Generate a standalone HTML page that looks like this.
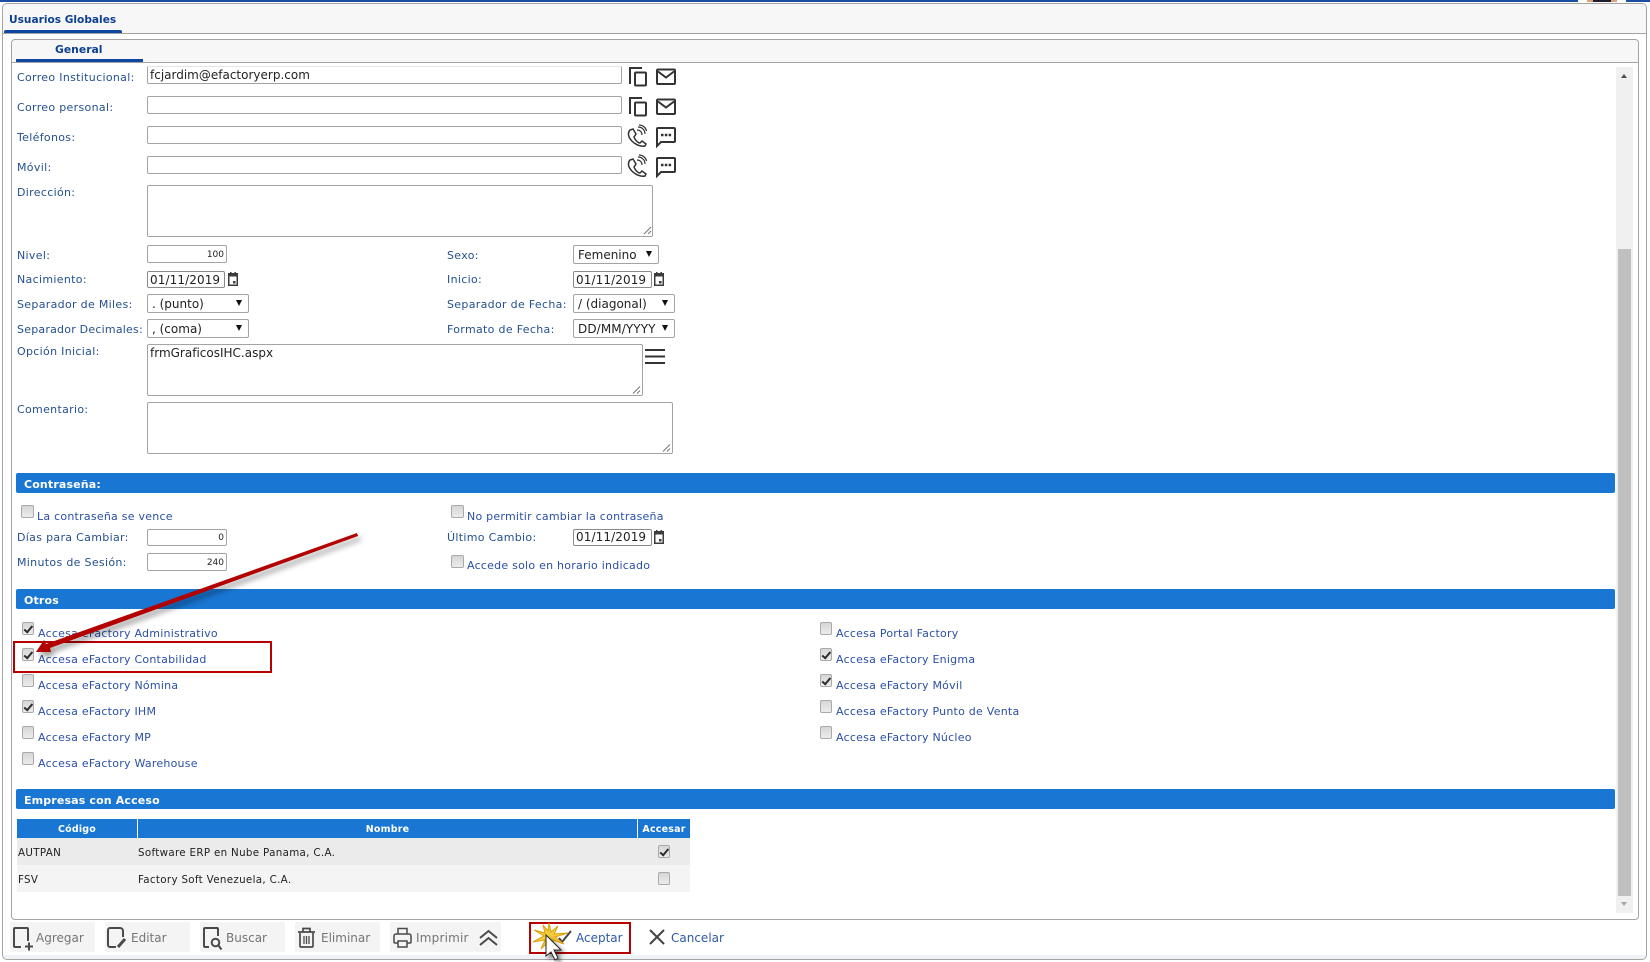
<!DOCTYPE html>
<html lang="es">
<head>
<meta charset="utf-8">
<title>Usuarios Globales</title>
<style>
html,body{margin:0;padding:0;background:#fff}
body{position:relative;width:1650px;height:962px;overflow:hidden;font-family:"DejaVu Sans",Verdana,sans-serif;font-size:11px;color:#24508f}
.a,.t,.i,.s,.v,.n,.cb,svg.ic{position:absolute}
.t{white-space:nowrap;line-height:14px;height:14px}
.l{color:#24508f;font-size:11px;letter-spacing:.32px;margin-top:1px}
.c{color:#2a4fa5;font-size:11px;letter-spacing:.24px;margin-top:1px}
.i,.s{box-sizing:border-box;border:1px solid #a3a3a3;border-radius:2px;background:#fff}
.v{color:#222;font-size:12px;line-height:16px;white-space:nowrap}
.n{color:#222;font-size:9px;line-height:14px;text-align:right;white-space:nowrap}
.s:after{content:"";position:absolute;right:6px;top:5px;border-left:3.5px solid transparent;border-right:3.5px solid transparent;border-top:6px solid #111}
.bar{position:absolute;left:16px;width:1599px;height:20px;background:#1976d2;border-radius:2px;color:#fff;font-weight:bold;font-size:11px;letter-spacing:.15px;line-height:23px;text-indent:8px}
.cb{box-sizing:border-box;width:12.500px;height:12.500px;border:1px solid #aaa;border-radius:2px;background:linear-gradient(#d6d6d6,#ececec)}
.cb.k:after{content:"";position:absolute;left:3.5px;top:0.5px;width:3px;height:6.5px;border:solid #2c2c2c;border-width:0 2.2px 2.2px 0;transform:rotate(40deg)}
.tb{position:absolute;top:922px;height:30px;width:85px;background:#f4f4f4;border-radius:2px}
.tt{color:#757575;font-size:12px}
.b{color:#2d5aa8;font-size:12px}
.th{color:#fff;font-weight:bold;font-size:9.500px;letter-spacing:.2px;text-align:center}
.td{color:#222;font-size:10.300px;letter-spacing:.32px}
svg.ic{fill:none;stroke:#333;stroke-width:2;overflow:visible}
</style>
</head>
<body>
<!-- top line -->
<div class="a" style="left:0;top:0;width:1578px;height:1.5px;background:#1a4fa0"></div>
<div class="a" style="left:1626px;top:0;width:24px;height:1.5px;background:#1a4fa0"></div>
<div class="a" style="left:1587px;top:0;width:6px;height:1.5px;background:#d9a37c"></div>
<div class="a" style="left:1593px;top:0;width:18px;height:1.5px;background:#201c30"></div>
<div class="a" style="left:1611px;top:0;width:6px;height:1.5px;background:#d9a37c"></div>

<!-- outer panel -->
<div class="a" style="box-sizing:border-box;left:2px;top:3px;width:1645px;height:957px;border:1px solid #a3a3a3;border-radius:5px;overflow:hidden;background:#fff">
  <div class="a" style="left:0;top:0;width:100%;height:29px;background:#f7f7f7;border-bottom:1px solid #a3a3a3"></div>
  <div class="a" style="left:0;bottom:0;width:100%;height:4px;background:#eef2f6"></div>
</div>
<div class="a" style="left:4px;top:30px;width:118px;height:3px;background:#0d47a1;border-radius:2px 2px 0 0"></div>
<div class="t" style="left:9px;top:13px;font-weight:bold;font-size:10.6px;color:#0d3f91">Usuarios Globales</div>

<!-- inner panel -->
<div class="a" style="box-sizing:border-box;left:11px;top:39px;width:1628px;height:881px;border:1px solid #a3a3a3;border-radius:4px;overflow:hidden;background:#fff">
  <div class="a" style="left:0;top:0;width:100%;height:22px;background:#f7f7f7;border-bottom:1px solid #a3a3a3"></div>
</div>
<div class="a" style="left:16px;top:59px;width:127px;height:3px;background:#0d47a1"></div>
<div class="t" style="left:55px;top:43px;font-weight:bold;font-size:10.8px;color:#0d3f91">General</div>

<!-- scrollbar -->
<div class="a" style="left:1616px;top:67px;width:17px;height:846px;background:#f0f0f0"></div>
<div class="a" style="left:1618px;top:249px;width:13px;height:647px;background:#c0c0c0"></div>
<div class="a" style="left:1621px;top:74px;border-left:3.5px solid transparent;border-right:3.5px solid transparent;border-bottom:4px solid #505050"></div>
<div class="a" style="left:1621px;top:902px;border-left:3.5px solid transparent;border-right:3.5px solid transparent;border-top:4px solid #a3a3a3"></div>

<!-- labels -->
<div class="t l" style="left:17px;top:70px">Correo Institucional:</div>
<div class="t l" style="left:17px;top:100px">Correo personal:</div>
<div class="t l" style="left:17px;top:130px">Teléfonos:</div>
<div class="t l" style="left:17px;top:160px">Móvil:</div>
<div class="t l" style="left:17px;top:185px">Dirección:</div>
<div class="t l" style="left:17px;top:248px">Nivel:</div>
<div class="t l" style="left:17px;top:272px">Nacimiento:</div>
<div class="t l" style="left:17px;top:297px">Separador de Miles:</div>
<div class="t l" style="left:17px;top:322px;letter-spacing:.22px">Separador Decimales:</div>
<div class="t l" style="left:17px;top:344px">Opción Inicial:</div>
<div class="t l" style="left:17px;top:402px">Comentario:</div>
<div class="t l" style="left:447px;top:248px">Sexo:</div>
<div class="t l" style="left:447px;top:272px">Inicio:</div>
<div class="t l" style="left:447px;top:297px">Separador de Fecha:</div>
<div class="t l" style="left:447px;top:322px">Formato de Fecha:</div>

<!-- inputs -->
<div class="i" style="left:147px;top:66px;width:475px;height:18px;border-top-color:#e5e5e5"></div>
<div class="v" style="left:150px;top:67px">fcjardim@efactoryerp.com</div>
<div class="i" style="left:147px;top:96px;width:475px;height:18px"></div>
<div class="i" style="left:147px;top:126px;width:475px;height:18px"></div>
<div class="i" style="left:147px;top:156px;width:475px;height:18px"></div>
<div class="i" style="left:147px;top:185px;width:506px;height:52px"></div>
<div class="i" style="left:147px;top:245px;width:80px;height:18px"></div>
<div class="n" style="left:147px;top:248px;width:77px">100</div>
<div class="s" style="left:573px;top:245px;width:86px;height:19px"></div>
<div class="v" style="left:578px;top:247px">Femenino</div>
<div class="i" style="left:147px;top:271px;width:78px;height:17px;border-color:#8a8a8a"></div>
<div class="v" style="left:150px;top:272px;letter-spacing:.1px">01/11/2019</div>
<div class="i" style="left:573px;top:271px;width:79px;height:17px;border-color:#8a8a8a"></div>
<div class="v" style="left:576px;top:272px;letter-spacing:.1px">01/11/2019</div>
<div class="s" style="left:147px;top:294px;width:102px;height:19px"></div>
<div class="v" style="left:152px;top:296px">. (punto)</div>
<div class="s" style="left:573px;top:294px;width:102px;height:19px"></div>
<div class="v" style="left:578px;top:296px">/ (diagonal)</div>
<div class="s" style="left:147px;top:319px;width:102px;height:19px"></div>
<div class="v" style="left:152px;top:321px">, (coma)</div>
<div class="s" style="left:573px;top:319px;width:102px;height:19px"></div>
<div class="v" style="left:578px;top:321px;width:79px;overflow:hidden;letter-spacing:.1px">DD/MM/YYYY</div>
<div class="i" style="left:147px;top:344px;width:496px;height:52px"></div>
<div class="v" style="left:150px;top:345px">frmGraficosIHC.aspx</div>
<div class="i" style="left:147px;top:402px;width:526px;height:52px"></div>

<!-- textarea grips -->
<svg class="ic" style="left:0;top:0;width:1px;height:1px;stroke:#777;stroke-width:1">
  <path d="M644 234l7-7M648 234l3-3M633 393.500l7-7M637 393.500l3-3M663 451.500l7-7M667 451.500l3-3"/>
</svg>

<!-- row icons -->
<svg class="ic" style="left:0;top:0;width:1px;height:1px">
  <g transform="translate(0,-1)">
    <path d="M642 69H630V85"/><rect x="635" y="73.500" width="11" height="13" rx="1"/>
    <path d="M642 99H630V115"/><rect x="635" y="103.500" width="11" height="13" rx="1"/>
    <rect x="657" y="70.500" width="18" height="14.500" rx="1"/><path d="M658 72.500L666 78.500L674 72.500"/>
    <rect x="657" y="100.500" width="18" height="14.500" rx="1"/><path d="M658 102.500L666 108.500L674 102.500"/>
    <path d="M658 129H674a1 1 0 0 1 1 1V142a1 1 0 0 1 -1 1H661L657 147V130a1 1 0 0 1 1-1Z"/>
    <path d="M661 136h2.500M664.800 136h2.500M668.600 136h2.500" stroke-width="2.500"/>
    <path d="M658 159H674a1 1 0 0 1 1 1V172a1 1 0 0 1 -1 1H661L657 177V160a1 1 0 0 1 1-1Z"/>
    <path d="M661 166h2.500M664.800 166h2.500M668.600 166h2.500" stroke-width="2.500"/>
    <g stroke-width="1.500" transform="translate(-2,0)">
      <path d="M632 131L635 130L638 135L636 138C637 141 640 144 642 144L644 142L648 145L647 147C639 149 626 138 632 131Z"/>
      <path d="M639 131C642 131 644 133 644 136M640 128C644 128 647 131 647 135M641 126C645 126 648 129 648.500 132" stroke-width="1.200"/>
      <path d="M632 161L635 160L638 165L636 168C637 171 640 174 642 174L644 172L648 175L647 177C639 179 626 168 632 161Z"/>
      <path d="M639 161C642 161 644 163 644 166M640 158C644 158 647 161 647 165M641 156C645 156 648 159 648.500 162" stroke-width="1.200"/>
    </g>
  </g>
  <!-- calendars -->
  <g fill="#3c3c3c" stroke="none">
    <path d="M228 273h2v-1h1.500v1h3v-1h1.500v1h2v13h-10zM229.500 276.500v8h7v-8z"/>
    <rect x="233" y="281" width="2.500" height="2.500"/>
    <path d="M654 273h2v-1h1.500v1h3v-1h1.500v1h2v13h-10zM655.500 276.500v8h7v-8z"/>
    <rect x="659" y="281" width="2.500" height="2.500"/>
    <path d="M654 531h2v-1h1.500v1h3v-1h1.500v1h2v13h-10zM655.500 534.500v8h7v-8z"/>
    <rect x="659" y="539" width="2.500" height="2.500"/>
  </g>
  <path d="M645 350H665M645 356.500H665M645 363H665" stroke-width="2"/>
</svg>

<!-- Contraseña -->
<div class="bar" style="top:473px">Contraseña:</div>
<div class="cb" style="left:21px;top:505px"></div>
<div class="t c" style="left:37px;top:509px">La contraseña se vence</div>
<div class="cb" style="left:451px;top:505px"></div>
<div class="t c" style="left:467px;top:509px">No permitir cambiar la contraseña</div>
<div class="t l" style="left:17px;top:530px">Días para Cambiar:</div>
<div class="i" style="left:147px;top:529px;width:80px;height:17px"></div>
<div class="n" style="left:147px;top:531px;width:77px">0</div>
<div class="t l" style="left:447px;top:530px">Último Cambio:</div>
<div class="i" style="left:573px;top:529px;width:79px;height:17px;border-color:#8a8a8a"></div>
<div class="v" style="left:576px;top:529px;letter-spacing:.1px">01/11/2019</div>
<div class="t l" style="left:17px;top:555px">Minutos de Sesión:</div>
<div class="i" style="left:147px;top:553px;width:80px;height:18px"></div>
<div class="n" style="left:147px;top:556px;width:77px">240</div>
<div class="cb" style="left:451px;top:555px"></div>
<div class="t c" style="left:467px;top:558px">Accede solo en horario indicado</div>

<!-- Otros -->
<div class="bar" style="top:589px">Otros</div>
<div class="cb k" style="left:21.500px;top:622px"></div><div class="t c" style="left:38px;top:626px">Accesa eFactory Administrativo</div>
<div class="cb k" style="left:21.500px;top:648px"></div><div class="t c" style="left:38px;top:652px">Accesa eFactory Contabilidad</div>
<div class="cb" style="left:21.500px;top:674px"></div><div class="t c" style="left:38px;top:678px">Accesa eFactory Nómina</div>
<div class="cb k" style="left:21.500px;top:700px"></div><div class="t c" style="left:38px;top:704px">Accesa eFactory IHM</div>
<div class="cb" style="left:21.500px;top:726px"></div><div class="t c" style="left:38px;top:730px">Accesa eFactory MP</div>
<div class="cb" style="left:21.500px;top:752px"></div><div class="t c" style="left:38px;top:756px">Accesa eFactory Warehouse</div>
<div class="cb" style="left:819.500px;top:622px"></div><div class="t c" style="left:836px;top:626px">Accesa Portal Factory</div>
<div class="cb k" style="left:819.500px;top:648px"></div><div class="t c" style="left:836px;top:652px">Accesa eFactory Enigma</div>
<div class="cb k" style="left:819.500px;top:674px"></div><div class="t c" style="left:836px;top:678px">Accesa eFactory Móvil</div>
<div class="cb" style="left:819.500px;top:700px"></div><div class="t c" style="left:836px;top:704px">Accesa eFactory Punto de Venta</div>
<div class="cb" style="left:819.500px;top:726px"></div><div class="t c" style="left:836px;top:730px">Accesa eFactory Núcleo</div>

<!-- Empresas -->
<div class="bar" style="top:789px">Empresas con Acceso</div>
<div class="a" style="left:17px;top:819px;width:673px;height:19px;background:#1976d2"></div>
<div class="a" style="left:137px;top:819px;width:1px;height:19px;background:#fff"></div>
<div class="a" style="left:637px;top:819px;width:1px;height:19px;background:#fff"></div>
<div class="t th" style="left:17px;top:823px;width:120px">Código</div>
<div class="t th" style="left:138px;top:823px;width:499px">Nombre</div>
<div class="t th" style="left:638px;top:823px;width:52px">Accesar</div>
<div class="a" style="left:17px;top:838px;width:673px;height:27px;background:#ebebeb"></div>
<div class="a" style="left:17px;top:865px;width:673px;height:27px;background:#f4f4f4"></div>
<div class="t td" style="left:18px;top:846px">AUTPAN</div>
<div class="t td" style="left:138px;top:846px">Software ERP en Nube Panama, C.A.</div>
<div class="t td" style="left:18px;top:873px">FSV</div>
<div class="t td" style="left:138px;top:873px">Factory Soft Venezuela, C.A.</div>
<div class="cb k" style="left:657.500px;top:845px"></div>
<div class="cb" style="left:657.500px;top:872px"></div>

<!-- toolbar -->
<div class="tb" style="left:10px"></div><div class="t tt" style="left:36px;top:931px">Agregar</div>
<div class="tb" style="left:105px"></div><div class="t tt" style="left:131px;top:931px">Editar</div>
<div class="tb" style="left:200px"></div><div class="t tt" style="left:226px;top:931px">Buscar</div>
<div class="tb" style="left:295px"></div><div class="t tt" style="left:321px;top:931px">Eliminar</div>
<div class="tb" style="left:390px"></div><div class="t tt" style="left:416px;top:931px;letter-spacing:.2px">Imprimir</div>
<div class="tb" style="left:475px;width:26px"></div>
<svg class="ic" style="left:0;top:0;width:1px;height:1px;stroke:#4a4a4a">
  <path d="M21 947H15a1 1 0 0 1-1-1V929a1 1 0 0 1 1-1H27a1 1 0 0 1 1 1V941M25 946.500H33M29 942.500V950.500"/>
  <path d="M116 947H110a2 2 0 0 1-2-2V930a2 2 0 0 1 2-2H120a3 3 0 0 1 3 3V937"/>
  <path d="M125 939L118 947" stroke-width="3"/>
  <path d="M209 947H205a1 1 0 0 1-1-1V929a1 1 0 0 1 1-1H217a1 1 0 0 1 1 1V936"/>
  <circle cx="215.500" cy="942.500" r="3.800"/>
  <path d="M218.500 945.500L221.500 949.500"/>
  <path d="M298 932H315M303 931.500V928.500H310V931.500M300 933V946a1 1 0 0 0 1 1H312a1 1 0 0 0 1-1V933" stroke-width="1.700"/>
  <path d="M304 936V944M306.500 936V944M309 936V944" stroke-width="1.300"/>
  <path d="M398 934V928.500H407V934M398 943H395a1 1 0 0 1-1-1V936a2 2 0 0 1 2-2H409a2 2 0 0 1 2 2V942a1 1 0 0 1-1 1H407M398 941H407V947H398Z" stroke-width="1.500"/>
  <path d="M480 938L488.500 931L497 938M480 945L488.500 938L497 945" stroke-width="2"/>
</svg>

<!-- Aceptar / Cancelar -->
<div class="a" style="box-sizing:border-box;left:529px;top:922px;width:102px;height:32px;border:2px solid #b80000"></div>
<svg class="ic" style="left:0;top:0;width:1px;height:1px;stroke:#444">
  <path d="M559 938L562 942L571 931" stroke-width="2"/>
  <path d="M650 930L664 944M664 930L650 944" stroke-width="2"/>
</svg>
<div class="t b" style="left:576px;top:931px">Aceptar</div>
<div class="t b" style="left:671px;top:931px">Cancelar</div>

<!-- callouts -->
<div class="a" style="box-sizing:border-box;left:13px;top:641px;width:259px;height:32px;border:2px solid #b80000"></div>
<svg class="a" style="left:0;top:0;filter:drop-shadow(3px 4px 3px rgba(0,0,0,.4))" width="1650" height="962">
  <path d="M357 533L358 536L50 648L51 652L36 652L44 640L46 644Z" fill="#b30000"/>
</svg>
<svg class="a" style="left:0;top:0" width="1650" height="962">
  <path d="M549 923L551 932L558 926L554 934L568 933L555 937L564 944L553 940L553 948L549 941L541 949L545 940L533 942L544 936L534 930L545 933L543 925L548 931Z" fill="#f4cf3e" stroke="#dd9f08" stroke-width="1"/>
  <g style="filter:drop-shadow(3px 3px 2px rgba(0,0,0,.5))">
    <path d="M546 935V956L551 952L555 960L558 958L554 950L561 950Z" fill="#fff" stroke="#222" stroke-width="1"/>
  </g>
</svg>
</body>
</html>
